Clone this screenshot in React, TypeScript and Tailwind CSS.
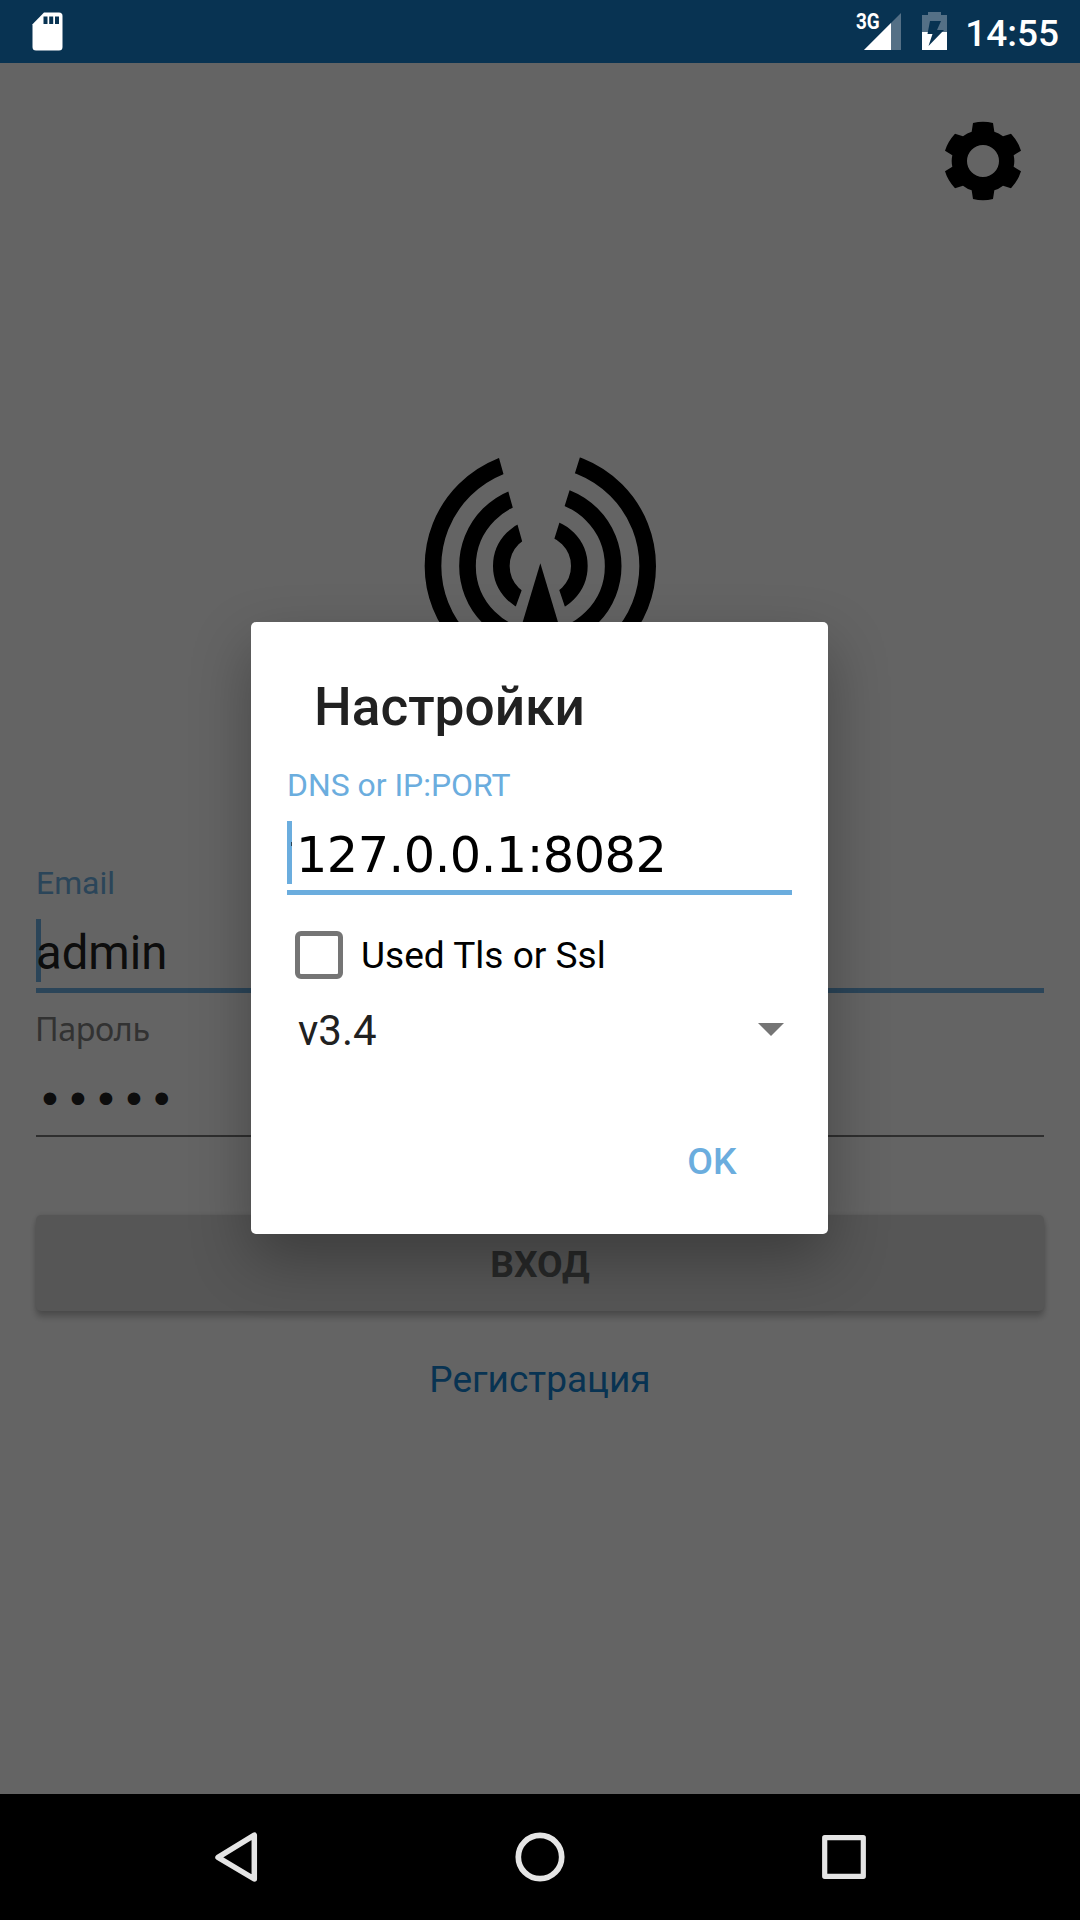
import React from "react";

function StatusBar() {
  return (
    <header className="flex h-[63px] shrink-0 items-start bg-[#083352] pl-8 pr-[21px] text-white">
      <svg className="mt-3 h-[39px] w-[31px]" viewBox="0 0 31 39" fill="none">
        <path d="M12 .5H27a3.5 3.5 0 0 1 3.5 3.5V35a3.5 3.5 0 0 1-3.5 3.5H4A3.5 3.5 0 0 1 .5 35V12.3Z" fill="#fff" />
        <path d="M11.5 4.5h4v7.500h-4zM17.200 4.500h4v7.500h-4zM23 4.500h4v7.500h-4z" fill="#083352" />
      </svg>
      <div className="ml-auto flex items-start">
        <span className="mt-[10px] h-6 w-[27px] origin-left scale-x-[.88] text-[21.5px] font-bold leading-6">3G</span>
        <svg className="-ml-[19px] mt-3 h-[38px] w-[38px]" viewBox="0 0 38 38">
          <path d="M37 1V38H0Z" fill="#547086" />
          <path d="M27 11V38H0Z" fill="#fff" />
        </svg>
        <svg className="ml-5 mt-3 h-[38px] w-[25px]" viewBox="0 0 25 38">
          <path d="M6 0H19V3H25V20H0V3H6Z" fill="#547086" />
          <path d="M0 20H25V38H0Z" fill="#fff" />
          <path d="M8 9H19L15 18H22L6.500 34L10.500 22H5.500Z" fill="#083352" />
        </svg>
        <span className="ml-[18px] mt-3 text-[37px] font-medium leading-[44px]">14:55</span>
      </div>
    </header>
  );
}

function GearIcon() {
  return (
    <svg className="h-20 w-20" viewBox="-120 -120 240 240">
      <path
        fillRule="evenodd"
        fill="#000"
        d="M-30-114Q0-122 30-114L34-88Q47-84 60-74L84-82Q106-58 114-31L92-17Q96 0 92 17L114 31Q106 58 84 82L60 74Q47 84 34 88L30 114Q0 122-30 114L-34 88Q-47 84-60 74L-84 82Q-106 58-114 31L-92 17Q-96 0-92-17L-114-31Q-106-58-84-82L-60-74Q-47-84-34-88ZM48 0A48 48 0 1 0-48 0A48 48 0 1 0 48 0Z"
      />
    </svg>
  );
}

function AntennaLogo() {
  return (
    <svg className="h-[240px] w-[280px]" viewBox="0 0 840 720">
      <clipPath id="waves">
        <path d="M0 0H282L387 378L365 451L320 575L270 720H0ZM840 0H556L440 370L453 378L478 451L520 575L570 720H840Z" />
      </clipPath>
      <g clipPath="url(#waves)" fill="none" stroke="#000" strokeWidth="50">
        <circle cx="421" cy="378" r="322" />
        <circle cx="421" cy="378" r="218.500" />
        <circle cx="421" cy="378" r="117" />
      </g>
      <path d="M421 370L526 720H316Z" />
    </svg>
  );
}

function LoginPage() {
  return (
    <div className="flex h-full flex-col bg-[#fafafa] px-9">
      <div className="flex justify-end pr-[21px] pt-[58px]">
        <GearIcon />
      </div>
      <div className="mt-[239px] flex justify-center">
        <AntennaLogo />
      </div>

      <label className="mt-[183px] h-[41px] text-[31.9px] leading-10 text-[#6badde]">Email</label>
      <div className="relative h-[89px] border-b-[5px] border-[#6badde] pt-4">
        <div className="absolute left-0 top-[15px] h-[63px] w-[5px] bg-[#6badde]" />
        <div className="relative text-[47.25px] leading-[67px] text-[#212121]">admin</div>
      </div>
      <label className="-ml-px mt-[15px] h-10 font-['Noto_Sans',sans-serif] text-[32.3px] leading-10 tracking-[-0.4px] text-[#7d7d7d]">Пароль</label>
      <div className="h-[89px] border-b-[2px] border-[#737373] pt-5 font-['Liberation_Mono',monospace] text-[46.6px] leading-[67px] text-[#212121]">
        •••••
      </div>

      <button className="mt-[78px] h-24 shrink-0 rounded-[5px] bg-[#d6d7d7] pt-[2px] text-[37.2px] font-bold leading-[44px] text-[#616564] shadow-[0_6px_6px_rgba(0,0,0,0.22),0_0_5px_rgba(0,0,0,0.12)]">
        ВХОД
      </button>
      <a className="mt-[47px] text-center text-[37px] leading-[44px] text-[#1480cd]">Регистрация</a>
    </div>
  );
}

function SettingsDialog() {
  return (
    <div className="flex h-[612px] w-[577px] flex-col rounded-[5px] bg-white px-9 pt-[55px] shadow-[0_25px_60px_rgba(0,0,0,0.3)]">
      <h1 className="ml-[27px] h-[60px] text-[53.2px] font-medium leading-[60px] text-[#212121]">Настройки</h1>
      <label className="mt-[28px] h-10 text-[31.9px] leading-10 text-[#6badde]">DNS or IP:PORT</label>
      <div className="relative h-[90px] border-b-[5px] border-[#6badde] pl-[9px] pt-4">
        <div className="absolute left-0 top-4 h-[63px] w-[5px] bg-[#6badde]" />
        <div className="absolute left-1 top-[37px] h-1 w-px bg-[#2b4558]" />
        <div className="font-['DejaVu_Sans',sans-serif] text-[49.3px] leading-[69px] tracking-[-0.5px] text-black">127.0.0.1:8082</div>
      </div>
      <div className="ml-2 mt-9 flex h-12 items-center">
        <div className="h-12 w-12 rounded-[6px] border-[5px] border-[#757575]" />
        <span className="ml-[18px] mt-[3px] text-[37.1px] leading-[44px] text-black">Used Tls or Ssl</span>
      </div>
      <div className="ml-[11px] mr-2 mt-[27px] flex h-[50px] items-center justify-between">
        <span className="text-[42px] leading-[50px] text-[#212121]">v3.4</span>
        <svg className="-mt-[2px] h-[13px] w-[26px]" viewBox="0 0 26 13">
          <path d="M0 0H26L13 13Z" fill="#757575" />
        </svg>
      </div>
      <button className="mr-[55px] mt-[83px] self-end text-[37.3px] font-medium leading-[44px] tracking-[0.3px] text-[#6badde]">OK</button>
    </div>
  );
}

function NavBar() {
  return (
    <nav className="flex h-[126px] shrink-0 items-center justify-between bg-black px-[207px]">
      <svg className="h-[60px] w-[60px]" viewBox="207 1827 60 60" fill="none" stroke="#e5e5e5" strokeWidth="5.5" strokeLinejoin="round">
        <path d="M218 1857.300L254.300 1835.200V1879.000Z" />
      </svg>
      <svg className="h-[60px] w-[60px]" viewBox="-30 -30 60 60" fill="none" stroke="#e5e5e5" strokeWidth="5.700">
        <circle r="21.700" />
      </svg>
      <svg className="h-[60px] w-[60px]" viewBox="813 1827 60 60" fill="none" stroke="#e5e5e5" strokeWidth="5.200" strokeLinejoin="round">
        <path d="M824.700 1837.700H863.300V1876.300H824.700Z" />
      </svg>
    </nav>
  );
}

export default function App() {
  return (
    <div className="flex h-[1920px] w-[1080px] flex-col overflow-hidden font-[Roboto,sans-serif]">
      <StatusBar />
      <main className="relative h-[1731px] shrink-0 overflow-hidden">
        <LoginPage />
        <div className="absolute inset-0 flex items-center justify-center bg-black/60 pb-[2px] pr-px">
          <SettingsDialog />
        </div>
      </main>
      <NavBar />
    </div>
  );
}
